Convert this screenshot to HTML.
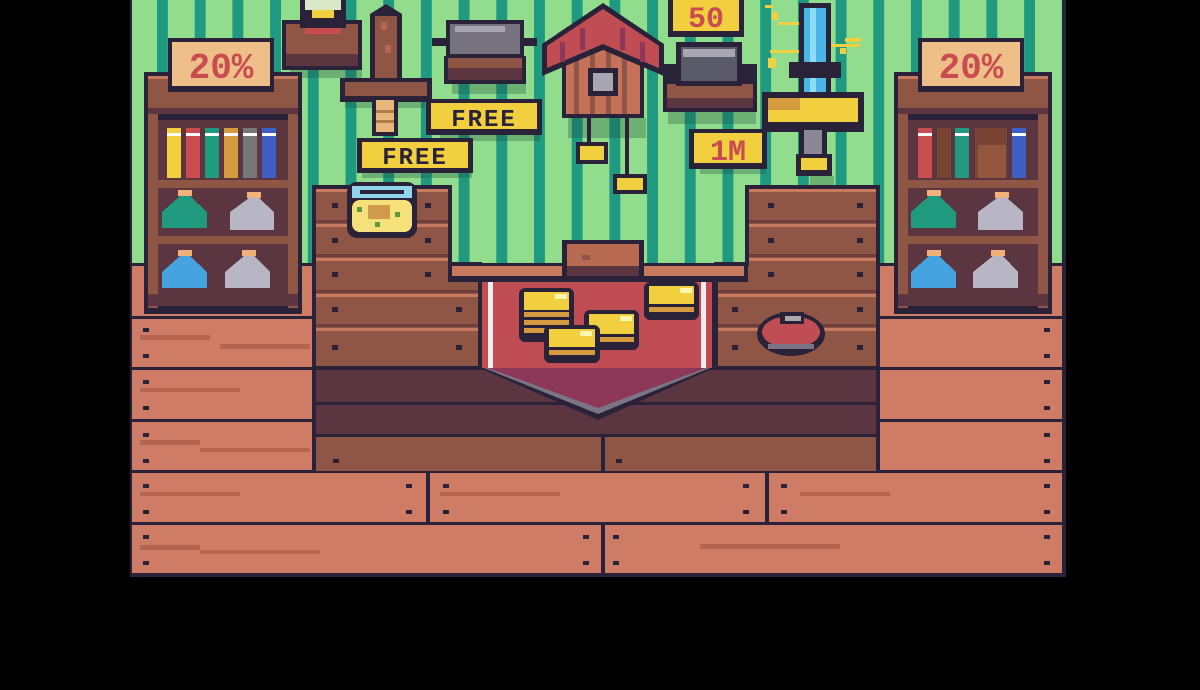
<!DOCTYPE html>
<html><head><meta charset="utf-8"><style>
html,body{margin:0;padding:0;background:#000;width:1200px;height:690px;overflow:hidden}
svg{display:block}
text{font-family:"Liberation Mono",monospace;font-weight:bold}
</style></head><body>
<svg width="1200" height="690" viewBox="0 0 1200 690" shape-rendering="crispEdges">
<defs>
<pattern id="st" x="157" y="0" width="37.7" height="300" patternUnits="userSpaceOnUse">
<rect width="37.7" height="300" fill="#91dd8d"/><rect x="0" width="11" height="300" fill="#1f9a80"/>
</pattern>
</defs>
<rect width="1200" height="690" fill="#000"/>
<!-- wall -->
<rect x="130" y="0" width="936" height="266" fill="url(#st)"/>
<!-- wall shadows -->
<g fill="#1b4a3e" opacity="0.3">
<rect x="290" y="68" width="72" height="10"/>
<rect x="452" y="82" width="74" height="12"/>
<rect x="668" y="112" width="88" height="12"/>
<rect x="345" y="100" width="80" height="8"/>
<rect x="440" y="135" width="100" height="6"/>
<rect x="362" y="172" width="110" height="6"/>
<rect x="700" y="168" width="66" height="6"/>
<rect x="568" y="118" width="78" height="20"/>
<rect x="810" y="176" width="24" height="10"/>
</g>
<!-- floor -->
<rect x="130" y="264" width="934" height="312" fill="#cf7c66"/>
<g fill="#2a2238">
<rect x="130" y="263" width="934" height="3"/>
<rect x="130" y="316" width="934" height="3"/>
<rect x="130" y="367" width="934" height="3"/>
<rect x="130" y="419" width="934" height="3"/>
<rect x="130" y="470" width="934" height="3"/>
<rect x="130" y="522" width="934" height="3"/>
<rect x="130" y="573" width="936" height="4"/>
<rect x="1062" y="0" width="4" height="577"/>
<rect x="130" y="0" width="2" height="577"/>
<rect x="426" y="471" width="4" height="52"/>
<rect x="765" y="471" width="4" height="52"/>
<rect x="601" y="523" width="4" height="51"/>
</g>
<!-- plank grain -->
<g fill="#b5644f">
<rect x="140" y="335" width="70" height="5"/><rect x="220" y="344" width="90" height="5"/>
<rect x="140" y="388" width="100" height="4"/><rect x="140" y="440" width="60" height="5"/><rect x="200" y="448" width="110" height="4"/>
<rect x="140" y="492" width="100" height="4"/><rect x="440" y="492" width="120" height="4"/><rect x="800" y="492" width="90" height="4"/>
<rect x="140" y="545" width="60" height="5"/><rect x="200" y="550" width="120" height="4"/><rect x="700" y="544" width="140" height="5"/>
</g>
<g fill="#2a2238">
<rect x="143" y="328" width="6" height="4"/><rect x="143" y="354" width="6" height="4"/>
<rect x="143" y="380" width="6" height="4"/><rect x="143" y="406" width="6" height="4"/>
<rect x="143" y="433" width="6" height="4"/><rect x="143" y="459" width="6" height="4"/>
<rect x="143" y="484" width="6" height="4"/><rect x="143" y="510" width="6" height="4"/>
<rect x="406" y="484" width="6" height="4"/><rect x="406" y="510" width="6" height="4"/>
<rect x="443" y="484" width="6" height="4"/><rect x="443" y="510" width="6" height="4"/>
<rect x="743" y="484" width="6" height="4"/><rect x="743" y="510" width="6" height="4"/>
<rect x="781" y="484" width="6" height="4"/><rect x="781" y="510" width="6" height="4"/>
<rect x="1044" y="484" width="6" height="4"/><rect x="1044" y="510" width="6" height="4"/>
<rect x="143" y="535" width="6" height="4"/><rect x="143" y="561" width="6" height="4"/>
<rect x="583" y="535" width="6" height="4"/><rect x="583" y="561" width="6" height="4"/>
<rect x="613" y="535" width="6" height="4"/><rect x="613" y="561" width="6" height="4"/>
<rect x="1044" y="535" width="6" height="4"/><rect x="1044" y="561" width="6" height="4"/>
<rect x="1044" y="328" width="6" height="4"/><rect x="1044" y="354" width="6" height="4"/>
<rect x="1044" y="380" width="6" height="4"/><rect x="1044" y="406" width="6" height="4"/>
<rect x="1044" y="433" width="6" height="4"/><rect x="1044" y="459" width="6" height="4"/>
</g>

<!-- COUNTER -->
<rect x="312" y="366" width="568" height="106" fill="#2a2238"/>
<rect x="316" y="368" width="560" height="68" fill="#5b3540"/>
<rect x="316" y="402" width="560" height="3" fill="#2a2238"/>
<rect x="316" y="436" width="560" height="35" fill="#8f5545"/>
<rect x="316" y="434" width="560" height="3" fill="#2a2238"/>
<rect x="601" y="436" width="4" height="35" fill="#2a2238"/>
<rect x="333" y="459" width="6" height="4" fill="#2a2238"/><rect x="616" y="459" width="6" height="4" fill="#2a2238"/>
<!-- left pillar -->
<rect x="312" y="185" width="140" height="84" fill="#2a2238"/>
<rect x="312" y="262" width="170" height="108" fill="#2a2238"/>
<rect x="316" y="189" width="132" height="80" fill="#8f5545"/>
<rect x="316" y="266" width="162" height="100" fill="#8f5545"/>
<g fill="#c87a5f">
<rect x="316" y="189" width="132" height="3"/><rect x="316" y="224" width="132" height="3"/>
<rect x="316" y="258" width="132" height="3"/><rect x="316" y="294" width="162" height="3"/><rect x="316" y="328" width="162" height="3"/>
</g>
<g fill="#6e3f3c"><rect x="316" y="220" width="132" height="3"/><rect x="316" y="254" width="132" height="3"/><rect x="316" y="290" width="162" height="3"/><rect x="316" y="324" width="162" height="3"/></g>
<g fill="#2a2238">
<rect x="332" y="203" width="6" height="5"/><rect x="425" y="203" width="6" height="5"/>
<rect x="332" y="238" width="6" height="5"/><rect x="425" y="238" width="6" height="5"/>
<rect x="332" y="272" width="6" height="5"/><rect x="425" y="272" width="6" height="5"/>
<rect x="332" y="307" width="6" height="5"/><rect x="456" y="307" width="6" height="5"/>
<rect x="332" y="345" width="6" height="5"/><rect x="456" y="345" width="6" height="5"/>
</g>
<!-- right pillar -->
<rect x="745" y="185" width="135" height="84" fill="#2a2238"/>
<rect x="714" y="262" width="166" height="108" fill="#2a2238"/>
<rect x="749" y="189" width="127" height="80" fill="#8f5545"/>
<rect x="718" y="266" width="158" height="100" fill="#8f5545"/>
<g fill="#c87a5f">
<rect x="749" y="189" width="127" height="3"/><rect x="749" y="224" width="127" height="3"/>
<rect x="749" y="258" width="127" height="3"/><rect x="718" y="294" width="158" height="3"/><rect x="718" y="328" width="158" height="3"/>
</g>
<g fill="#6e3f3c"><rect x="749" y="220" width="127" height="3"/><rect x="749" y="254" width="127" height="3"/><rect x="718" y="290" width="158" height="3"/><rect x="718" y="324" width="158" height="3"/></g>
<g fill="#2a2238">
<rect x="768" y="203" width="6" height="5"/><rect x="857" y="203" width="6" height="5"/>
<rect x="768" y="238" width="6" height="5"/><rect x="857" y="238" width="6" height="5"/>
<rect x="768" y="272" width="6" height="5"/><rect x="857" y="272" width="6" height="5"/>
<rect x="732" y="307" width="6" height="5"/><rect x="857" y="307" width="6" height="5"/>
<rect x="732" y="345" width="6" height="5"/><rect x="857" y="345" width="6" height="5"/>
</g>
<!-- middle lip -->
<rect x="448" y="264" width="300" height="18" fill="#2a2238"/>
<rect x="452" y="266" width="292" height="10" fill="#c87a5f"/>
<!-- center box -->
<rect x="562" y="240" width="82" height="40" fill="#2a2238"/>
<rect x="567" y="244" width="72" height="22" fill="#b86a52"/>
<rect x="567" y="266" width="72" height="10" fill="#5b3540"/>
<rect x="582" y="255" width="8" height="5" fill="#8f5545"/>
<!-- banner -->
<rect x="478" y="278" width="238" height="92" fill="#2a2238"/>
<rect x="482" y="282" width="230" height="86" fill="#c04d53"/>
<rect x="488" y="282" width="5" height="86" fill="#eee"/>
<rect x="701" y="282" width="5" height="86" fill="#eee"/>
<polygon points="480,368 714,368 598,420" fill="#2a2238"/>
<polygon points="484,368 710,368 598,414" fill="#7a7484"/>
<polygon points="488,368 706,368 598,408" fill="#8d3858"/>
<!-- coins -->
<g>
<rect x="519" y="288" width="55" height="54" fill="#2a2238" rx="6"/>
<rect x="524" y="292" width="45" height="18" fill="#f2cf3f"/>
<rect x="524" y="312" width="45" height="5" fill="#d79b3f"/><rect x="524" y="320" width="45" height="5" fill="#d79b3f"/><rect x="524" y="328" width="45" height="5" fill="#d79b3f"/>
<rect x="584" y="310" width="55" height="40" fill="#2a2238" rx="6"/>
<rect x="589" y="314" width="45" height="20" fill="#f2cf3f"/><rect x="589" y="337" width="45" height="5" fill="#d79b3f"/>
<rect x="544" y="325" width="56" height="38" fill="#2a2238" rx="6"/>
<rect x="549" y="329" width="46" height="18" fill="#f2cf3f"/><rect x="549" y="350" width="46" height="5" fill="#d79b3f"/>
<rect x="644" y="282" width="55" height="38" fill="#2a2238" rx="6"/>
<rect x="649" y="286" width="45" height="18" fill="#f2cf3f"/><rect x="649" y="307" width="45" height="5" fill="#d79b3f"/>
<g fill="#fff6b0"><rect x="555" y="294" width="12" height="5"/><rect x="620" y="316" width="12" height="5"/><rect x="580" y="331" width="12" height="5"/><rect x="680" y="288" width="12" height="5"/></g>
</g>
<!-- red button -->
<ellipse cx="791" cy="334" rx="34" ry="22" fill="#2a2238"/>
<ellipse cx="791" cy="332" rx="29" ry="16" fill="#c04d53"/>
<rect x="780" y="312" width="24" height="12" fill="#2a2238"/><rect x="785" y="316" width="16" height="5" fill="#aaa"/>
<rect x="768" y="344" width="46" height="5" fill="#7a7484"/>
<!-- fishbowl -->
<rect x="347" y="182" width="70" height="56" rx="10" fill="#2a2238"/>
<rect x="352" y="186" width="60" height="12" fill="#8fd6ec"/>
<rect x="360" y="190" width="44" height="4" fill="#2a2238"/>
<rect x="352" y="200" width="60" height="32" rx="8" fill="#f6e07a"/>
<rect x="368" y="205" width="22" height="14" fill="#d09a4c"/>
<rect x="357" y="207" width="5" height="5" fill="#5a9a3a"/><rect x="395" y="212" width="5" height="5" fill="#5a9a3a"/><rect x="375" y="222" width="5" height="5" fill="#5a9a3a"/>

<!-- LEFT BOOKSHELF -->
<rect x="144" y="72" width="158" height="242" fill="#2a2238"/>
<rect x="148" y="76" width="150" height="32" fill="#8f5545"/>
<rect x="148" y="76" width="150" height="3" fill="#c87a5f"/>
<rect x="148" y="108" width="150" height="6" fill="#5b3540"/>
<rect x="148" y="114" width="10" height="194" fill="#8f5545"/><rect x="288" y="114" width="10" height="194" fill="#8f5545"/>
<rect x="158" y="120" width="130" height="180" fill="#5b3540"/>
<rect x="158" y="180" width="130" height="8" fill="#8f5545"/>
<rect x="158" y="236" width="130" height="8" fill="#8f5545"/>
<rect x="148" y="294" width="150" height="12" fill="#5b3540"/>
<g>
<rect x="167" y="128" width="14" height="50" fill="#f2cf3f"/><rect x="186" y="128" width="14" height="50" fill="#c84c50"/>
<rect x="205" y="128" width="14" height="50" fill="#1f9a7e"/><rect x="224" y="128" width="14" height="50" fill="#d79b3f"/>
<rect x="243" y="128" width="14" height="50" fill="#777"/><rect x="262" y="128" width="14" height="50" fill="#3e5fc4"/>
<g fill="#fff"><rect x="167" y="133" width="14" height="3"/><rect x="186" y="133" width="14" height="3"/><rect x="205" y="133" width="14" height="3"/><rect x="224" y="133" width="14" height="3"/><rect x="243" y="133" width="14" height="3"/><rect x="262" y="133" width="14" height="3"/></g>
</g>
<g>
<rect x="178" y="190" width="14" height="6" fill="#f0b27a"/><polygon points="180,196 190,196 207,212 207,228 162,228 162,212" fill="#1f9a7e"/>
<rect x="247" y="192" width="14" height="6" fill="#f0b27a"/><polygon points="249,198 259,198 274,212 274,230 230,230 230,212" fill="#b8b6c4"/>
<rect x="178" y="250" width="14" height="6" fill="#f0b27a"/><polygon points="180,256 190,256 207,272 207,288 162,288 162,272" fill="#45a3e0"/>
<rect x="242" y="250" width="14" height="6" fill="#f0b27a"/><polygon points="244,256 254,256 270,272 270,288 225,288 225,272" fill="#b8b6c4"/>
</g>
<rect x="168" y="38" width="106" height="54" fill="#2a2238"/>
<rect x="172" y="42" width="98" height="44" fill="#eebf88"/>
<text x="221" y="78" font-size="36" fill="#c84c50" text-anchor="middle">20%</text>

<!-- RIGHT BOOKSHELF -->
<rect x="894" y="72" width="158" height="242" fill="#2a2238"/>
<rect x="898" y="76" width="150" height="32" fill="#8f5545"/>
<rect x="898" y="76" width="150" height="3" fill="#c87a5f"/>
<rect x="898" y="108" width="150" height="6" fill="#5b3540"/>
<rect x="898" y="114" width="10" height="194" fill="#8f5545"/><rect x="1038" y="114" width="10" height="194" fill="#8f5545"/>
<rect x="908" y="120" width="130" height="180" fill="#5b3540"/>
<rect x="908" y="180" width="130" height="8" fill="#8f5545"/>
<rect x="908" y="236" width="130" height="8" fill="#8f5545"/>
<rect x="898" y="294" width="150" height="12" fill="#5b3540"/>
<rect x="918" y="128" width="14" height="50" fill="#c84c50"/><rect x="937" y="128" width="14" height="50" fill="#7a4434"/>
<rect x="955" y="128" width="14" height="50" fill="#1f9a7e"/><rect x="975" y="128" width="32" height="50" fill="#7a4434"/>
<rect x="978" y="145" width="28" height="33" fill="#93573e"/>
<rect x="1012" y="128" width="14" height="50" fill="#3e5fc4"/>
<g fill="#fff"><rect x="918" y="133" width="14" height="3"/><rect x="955" y="133" width="14" height="3"/><rect x="1012" y="133" width="14" height="3"/></g>
<rect x="927" y="190" width="14" height="6" fill="#f0b27a"/><polygon points="929,196 939,196 956,212 956,228 911,228 911,212" fill="#1f9a7e"/>
<rect x="995" y="192" width="14" height="6" fill="#f0b27a"/><polygon points="997,198 1007,198 1023,212 1023,230 978,230 978,212" fill="#b8b6c4"/>
<rect x="927" y="250" width="14" height="6" fill="#f0b27a"/><polygon points="929,256 939,256 956,272 956,288 911,288 911,272" fill="#45a3e0"/>
<rect x="991" y="250" width="14" height="6" fill="#f0b27a"/><polygon points="993,256 1003,256 1018,272 1018,288 973,288 973,272" fill="#b8b6c4"/>
<rect x="918" y="38" width="106" height="54" fill="#2a2238"/>
<rect x="922" y="42" width="98" height="44" fill="#eebf88"/>
<text x="971" y="78" font-size="36" fill="#c84c50" text-anchor="middle">20%</text>

<!-- hourglass shelf -->
<rect x="282" y="20" width="80" height="50" fill="#2a2238"/>
<rect x="286" y="24" width="72" height="30" fill="#8f5545"/>
<rect x="286" y="54" width="72" height="12" fill="#5b3540"/>
<rect x="300" y="0" width="46" height="28" fill="#2a2238"/>
<rect x="305" y="0" width="36" height="10" fill="#d9e8c8"/><rect x="312" y="10" width="22" height="8" fill="#f2cf3f"/>
<rect x="305" y="28" width="36" height="6" fill="#c84c50"/>

<!-- wooden sword -->
<polygon points="386,4 402,14 402,85 370,85 370,14" fill="#2a2238"/>
<rect x="375" y="16" width="22" height="70" fill="#8f5545"/>
<rect x="381" y="22" width="6" height="8" fill="#b5644f"/><rect x="385" y="45" width="6" height="8" fill="#b5644f"/>
<rect x="340" y="78" width="92" height="24" fill="#2a2238"/>
<rect x="345" y="82" width="82" height="14" fill="#8f5545"/>
<rect x="372" y="100" width="26" height="36" fill="#2a2238"/>
<rect x="376" y="100" width="18" height="32" fill="#e8b77a"/>
<rect x="376" y="110" width="18" height="3" fill="#b57a4a"/><rect x="376" y="120" width="18" height="3" fill="#b57a4a"/>

<!-- pot -->
<rect x="432" y="38" width="105" height="8" fill="#2a2238"/>
<rect x="446" y="20" width="78" height="40" fill="#2a2238"/>
<rect x="450" y="24" width="70" height="30" fill="#76737f"/>
<rect x="455" y="26" width="50" height="6" fill="#a8a6b2"/>
<rect x="444" y="56" width="82" height="28" fill="#2a2238"/>
<rect x="448" y="58" width="74" height="10" fill="#8f5545"/><rect x="448" y="68" width="74" height="12" fill="#5b3540"/>

<!-- FREE labels -->
<rect x="426" y="99" width="116" height="36" fill="#2a2238"/>
<rect x="431" y="103" width="106" height="26" fill="#f2cf3f"/>
<text x="484" y="126" font-size="24" fill="#2a2238" text-anchor="middle" letter-spacing="2">FREE</text>
<rect x="357" y="138" width="116" height="35" fill="#2a2238"/>
<rect x="362" y="142" width="106" height="26" fill="#f2cf3f"/>
<text x="415" y="164" font-size="24" fill="#2a2238" text-anchor="middle" letter-spacing="2">FREE</text>

<!-- birdhouse -->
<rect x="587" y="112" width="4" height="35" fill="#2a2238"/><rect x="625" y="112" width="4" height="65" fill="#2a2238"/>
<rect x="576" y="142" width="32" height="22" fill="#2a2238"/><rect x="580" y="146" width="24" height="14" fill="#f2cf3f"/>
<rect x="613" y="174" width="34" height="20" fill="#2a2238"/><rect x="617" y="178" width="26" height="12" fill="#f2cf3f"/>
<rect x="562" y="40" width="82" height="78" fill="#2a2238"/>
<rect x="566" y="44" width="74" height="70" fill="#c4735a"/>
<g fill="#8f5545"><rect x="574" y="44" width="5" height="70"/><rect x="590" y="44" width="5" height="70"/><rect x="606" y="44" width="5" height="70"/><rect x="622" y="44" width="5" height="70"/></g>
<rect x="588" y="68" width="30" height="28" fill="#2a2238"/><rect x="593" y="73" width="20" height="18" fill="#a8a6b2"/>
<polygon points="603,3 664,44 664,76 603,50 542,76 542,44" fill="#2a2238"/>
<polygon points="603,9 659,46 659,68 603,44 547,68 547,46" fill="#c04d53"/>
<g fill="#8d3858"><rect x="560" y="42" width="5" height="20"/><rect x="580" y="28" width="5" height="22"/><rect x="620" y="28" width="5" height="22"/><rect x="640" y="42" width="5" height="20"/></g>

<!-- 50 sign -->
<rect x="668" y="0" width="76" height="37" fill="#2a2238"/>
<rect x="673" y="0" width="66" height="31" fill="#f2cf3f"/>
<text x="706" y="27" font-size="30" fill="#c84c50" text-anchor="middle">50</text>
<!-- helmet shelf -->
<rect x="663" y="64" width="94" height="48" fill="#2a2238"/>
<rect x="667" y="84" width="86" height="14" fill="#8f5545"/><rect x="667" y="98" width="86" height="10" fill="#5b3540"/>
<rect x="676" y="42" width="66" height="44" fill="#2a2238"/>
<rect x="681" y="47" width="56" height="34" fill="#5b5a68"/>
<rect x="683" y="49" width="52" height="8" fill="#a8a6b2"/>
<!-- 1M sign -->
<rect x="689" y="129" width="78" height="40" fill="#2a2238"/>
<rect x="694" y="133" width="68" height="30" fill="#f2cf3f"/>
<text x="728" y="160" font-size="30" fill="#c84c50" text-anchor="middle">1M</text>

<!-- magic sword -->
<g fill="#f2cf3f">
<rect x="765" y="5" width="8" height="3"/><rect x="772" y="12" width="6" height="8"/><rect x="778" y="22" width="30" height="3"/>
<rect x="770" y="50" width="35" height="3"/><rect x="768" y="58" width="8" height="10"/>
<rect x="825" y="44" width="35" height="3"/><rect x="845" y="38" width="16" height="4"/><rect x="840" y="48" width="6" height="6"/>
<rect x="810" y="85" width="20" height="3"/><rect x="806" y="98" width="6" height="4"/>
</g>
<rect x="799" y="3" width="32" height="110" fill="#2a2238"/>
<rect x="804" y="8" width="22" height="104" fill="#4ab6e6"/>
<rect x="810" y="8" width="6" height="104" fill="#8fdcf6"/>
<rect x="789" y="62" width="52" height="16" fill="#2a2238"/>
<rect x="762" y="92" width="102" height="40" fill="#2a2238"/>
<rect x="768" y="98" width="90" height="24" fill="#f2cf3f"/>
<rect x="768" y="98" width="32" height="12" fill="#d79b3f"/>
<rect x="799" y="128" width="28" height="30" fill="#2a2238"/>
<rect x="804" y="130" width="18" height="26" fill="#8a8896"/>
<rect x="796" y="154" width="36" height="22" fill="#2a2238"/>
<rect x="801" y="158" width="26" height="12" fill="#f2cf3f"/>
</svg>
</body></html>
